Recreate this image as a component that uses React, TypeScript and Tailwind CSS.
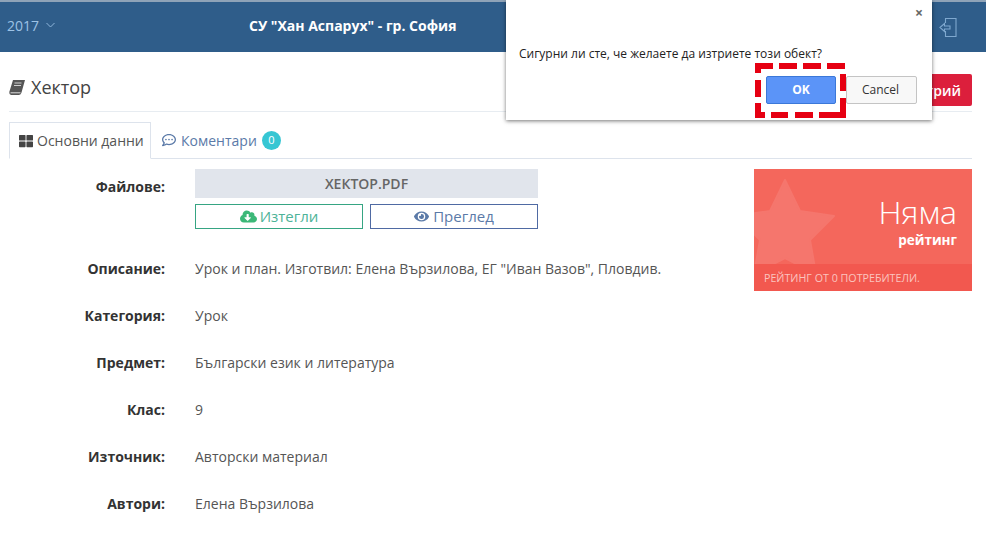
import React from "react";
import { FaThLarge, FaRegCommentDots, FaCloudDownloadAlt, FaEye } from "react-icons/fa";

const rows: [string, string][] = [
  ["Описание:", 'Урок и план. Изготвил: Елена Вързилова, ЕГ "Иван Вазов", Пловдив.'],
  ["Категория:", "Урок"],
  ["Предмет:", "Български език и литература"],
  ["Клас:", "9"],
  ["Източник:", "Авторски материал"],
  ["Автори:", "Елена Вързилова"],
];

function Row({ label, value }: { label: string; value: string }) {
  return (
    <div className="flex h-[47px] items-start">
      <div className="w-[156px] text-right text-[14px] font-bold leading-[20px] text-[#333]">{label}</div>
      <div className="ml-[30px] text-[14px] leading-[20px] text-[#555]">{value}</div>
    </div>
  );
}

const dashes: [number, number, number, number][] = [
  [0, 0, 18, 6], [24, 0, 18, 6], [48, 0, 18, 6], [72, 0, 18, 6],
  [85, 11, 6, 17], [85, 35, 6, 20],
  [0, 49, 10, 6], [16, 49, 17, 6], [40, 49, 18, 6], [64, 49, 27, 6],
  [0, 0, 6, 10], [0, 17, 6, 17], [0, 40, 6, 15],
];

export default function App() {
  return (
    <div className="relative h-[539px] w-[986px] overflow-hidden bg-white font-['Open_Sans',sans-serif] text-[#333]">
      <header className="flex h-[52px] items-center border-t-2 border-[#8fa3b8] bg-[#2f5d8a] pb-[4px]">
        <div className="ml-[7px] flex items-center gap-[7px] text-[14px] text-[#9dc3e6]">
          <span>2017</span>
          <svg width="9" height="6" viewBox="0 0 9 6" fill="none" stroke="#8fb6da" strokeWidth="1"><path d="M0.5 1 L4.5 5 L8.5 1" /></svg>
        </div>
        <div className="ml-[194px] text-[14px] font-bold text-white">СУ "Хан Аспарух" - гр. София</div>
        <svg className="ml-auto mr-[29px] mt-[5px]" width="18" height="20" viewBox="0 0 18 20" fill="none" stroke="#7fa8cf" strokeWidth="1.1">
          <path d="M6.5 5 V0.5 H17 V18.5 H6.5 V13" />
          <path d="M1 9.5 L5.5 5.5 V8 H11 V11 H5.5 V13.5 Z" />
        </svg>
      </header>

      <main className="px-[9px] pr-[14px]">
        <div className="flex h-[60px] items-end justify-between border-b border-[#e7ecf1] pb-[5px]">
          <div className="mb-[7px] flex items-center gap-[6px] text-[18px] leading-[24px] text-[#444]">
            <svg width="16" height="15" viewBox="0 0 16 15">
              <path d="M4 0 H16 L12.5 12.5 Q12 14.5 10 15 H2 Q0 14.5 0.3 12 Z" fill="#555" />
              <path d="M5.5 3 H12.5 M5 5.5 H12" stroke="#ddd" strokeWidth="0.9" />
              <path d="M1.5 12.8 H11.5" stroke="#ddd" strokeWidth="1" />
            </svg>
            <span>Хектор</span>
          </div>
          <button className="h-[32px] rounded-[2px] bg-[#dc1f3c] px-[11px] text-[14px] font-semibold text-white">Изтрий</button>
        </div>

        <div className="mt-[10px] flex h-[37px] items-end border-b border-[#dde3ec]">
          <div className="-mb-px flex h-[37px] w-[142px] items-center gap-[4px] border border-b-white border-[#dde3ec] pl-[9px] text-[14px] text-[#555]">
            <FaThLarge className="text-[14px] text-[#444]" />
            <span>Основни данни</span>
          </div>
          <div className="flex h-[36px] items-center pl-[11px] text-[14px] text-[#5b7aa8]">
            <FaRegCommentDots className="mr-[5px] text-[14px]" />
            <span>Коментари</span>
            <span className="ml-[5px] flex h-[19px] w-[19px] items-center justify-center rounded-full bg-[#36c6d3] text-[11px] text-white">0</span>
          </div>
        </div>

        <div className="mt-[10px] flex justify-between">
          <div className="pt-[1px]">
            <div className="flex h-[89px] items-start">
              <div className="mt-[7px] w-[156px] text-right text-[14px] font-bold leading-[20px] text-[#333]">Файлове:</div>
              <div className="-mt-[1px] ml-[30px] w-[343px]">
                <div className="flex h-[29px] items-center justify-center bg-[#e1e5ec] text-[14px] font-semibold text-[#666]">ХЕКТОР.PDF</div>
                <div className="mt-[6px] flex gap-[7px]">
                  <div className="flex h-[25px] flex-1 items-center justify-center gap-[3px] border border-[#36a583] text-[15px] text-[#4db398]">
                    <FaCloudDownloadAlt className="text-[17px] text-[#3cb878]" />
                    <span>Изтегли</span>
                  </div>
                  <div className="flex h-[25px] flex-1 items-center justify-center gap-[4px] border border-[#4f6aa3] text-[15px] text-[#5b7aa8]">
                    <FaEye className="text-[15px] text-[#5b7aa8]" />
                    <span>Преглед</span>
                  </div>
                </div>
              </div>
            </div>
            {rows.map(([l, v]) => (
              <Row key={l} label={l} value={v} />
            ))}
          </div>

          <div className="relative h-[122px] w-[218px] overflow-hidden bg-[#f4675c] text-white">
            <svg className="absolute left-0 top-0" width="100" height="110" viewBox="0 0 100 110">
              <polygon
                points="31,11 46,42 80,47 56,71 62,105 31,89 0,105 6,71 -18,47 16,42"
                fill="#f5766d"
                stroke="#f5766d"
                strokeWidth="2"
                strokeLinejoin="round"
              />
            </svg>
            <div className="relative flex h-[95px] flex-col items-end pr-[15px] pt-[23px]">
              <div className="text-[32px] font-light leading-[40px]">Няма</div>
              <div className="text-[13.5px] font-bold leading-[16px]">рейтинг</div>
            </div>
            <div className="relative flex h-[27px] items-center bg-[#f2584f] pl-[10px] pt-[2px] text-[10.7px] text-[#fbc4bf]">РЕЙТИНГ ОТ 0 ПОТРЕБИТЕЛИ.</div>
          </div>
        </div>
      </main>

      <div className="absolute left-[506px] top-0 h-[120px] w-[426px] bg-white shadow-[0_1px_4px_rgba(0,0,0,0.55)]">
        <div className="absolute right-[9px] top-[6px] text-[14px] font-bold leading-[14px] text-[#666]">×</div>
        <div className="absolute left-[13px] top-[46px] text-[12px] leading-[16px] text-[#222]">Сигурни ли сте, че желаете да изтриете този обект?</div>
        <div className="absolute left-[260px] top-[76px] flex gap-[10px]">
          <button className="flex h-[28px] w-[70px] items-center justify-center rounded-[2px] border border-[#3b78d8] bg-[#5b94f8] text-[12px] font-bold text-white">OK</button>
          <button className="flex h-[28px] w-[71px] items-center justify-center rounded-[2px] border border-[#c4c4c4] bg-[#f8f8f8] pr-[2px] text-[12px] text-[#333]">Cancel</button>
        </div>
      </div>

      <svg className="absolute left-[755px] top-[63px]" width="91" height="55" viewBox="0 0 91 55" fill="#e60012">
        {dashes.map(([x, y, w, h], i) => (
          <rect key={i} x={x} y={y} width={w} height={h} />
        ))}
      </svg>
    </div>
  );
}
